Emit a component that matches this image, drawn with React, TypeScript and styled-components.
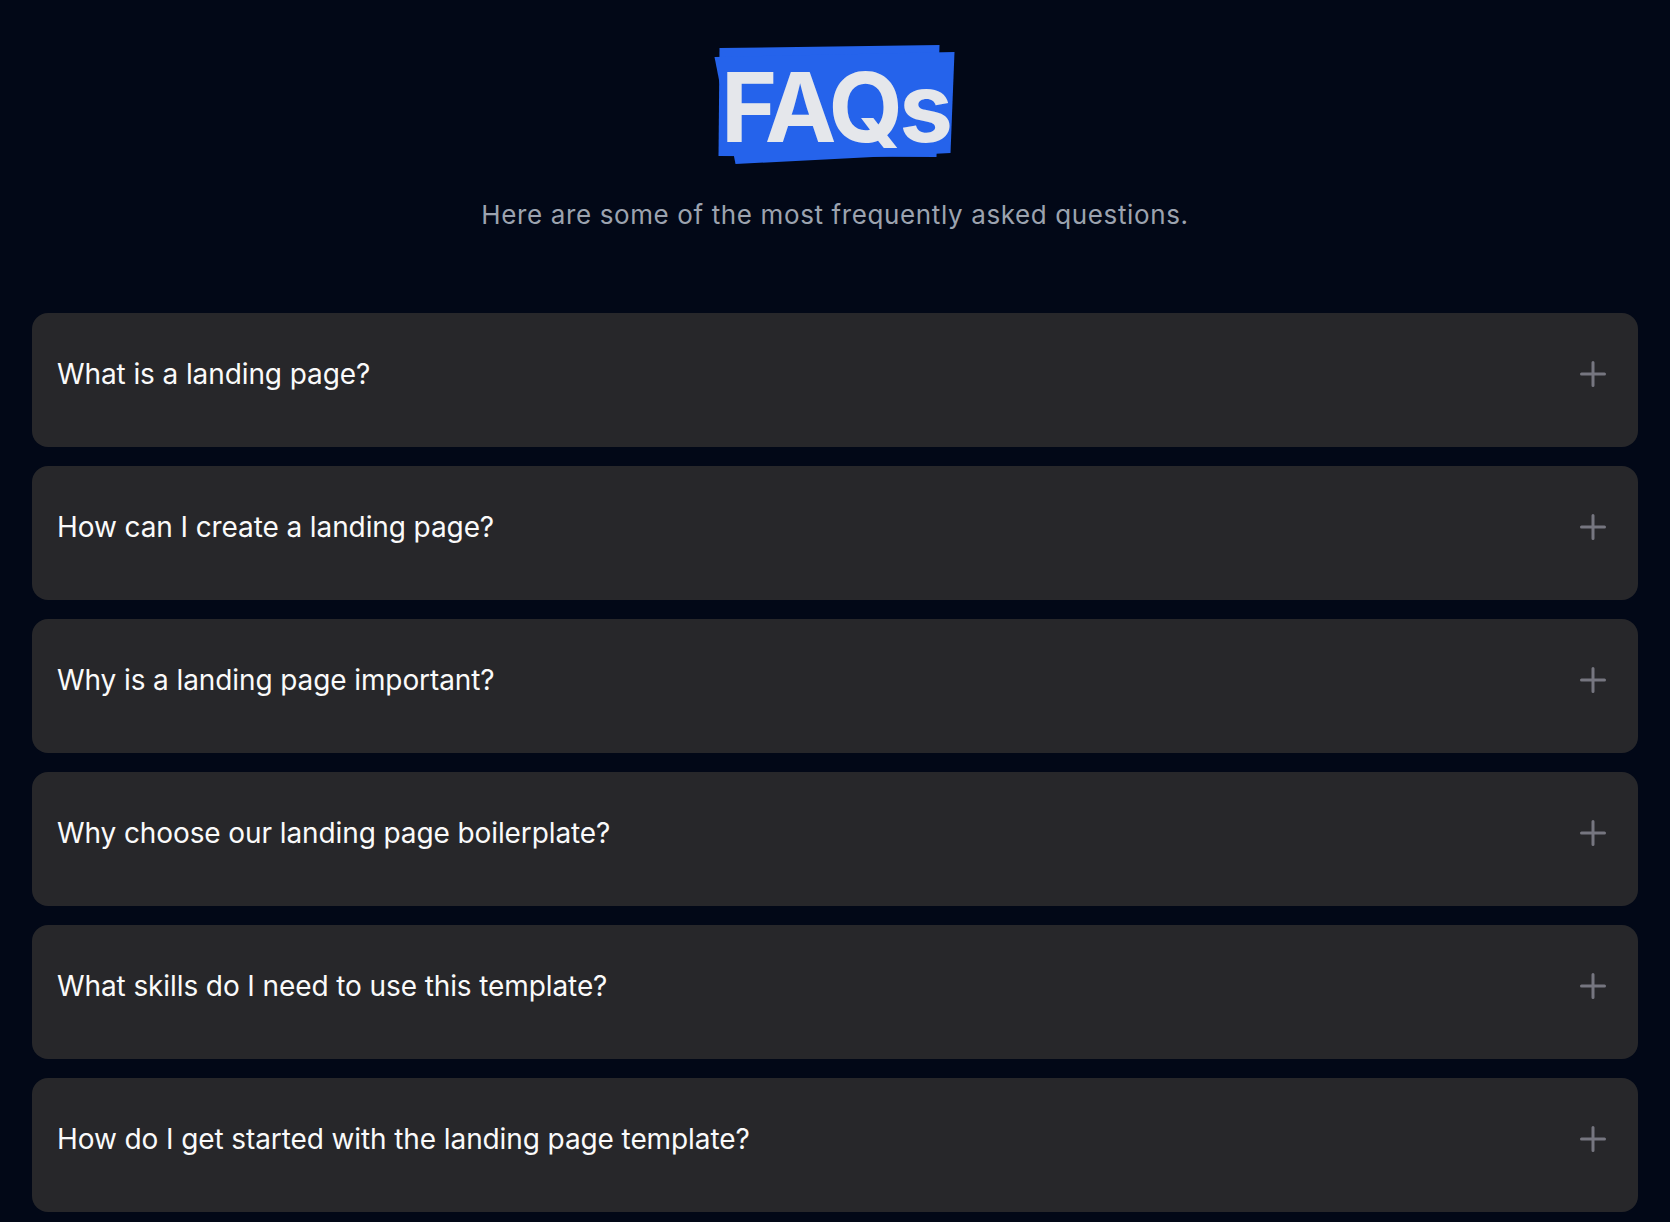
import React from "react";
import styled, { createGlobalStyle } from "styled-components";

const GlobalStyle = createGlobalStyle`
  html, body {
    margin: 0;
    padding: 0;
    background: #020817;
  }
  body {
    font-family: Inter, "Noto Sans", "Liberation Sans", sans-serif;
    -webkit-font-smoothing: antialiased;
  }
`;

const Page = styled.main`
  min-height: 1222px;
  background: #020817;
  padding: 60px 32px 0;
  box-sizing: border-box;
`;

const Hero = styled.header`
  display: flex;
  flex-direction: column;
  align-items: center;
`;

const TitleWrap = styled.div`
  position: relative;
  display: inline-block;
`;

const Highlight = styled.svg`
  position: absolute;
  left: 50%;
  top: -17px;
  width: 245px;
  height: 123px;
  transform: translateX(-50%);
  z-index: 0;
`;

const Title = styled.h1`
  position: relative;
  z-index: 1;
  margin: 0;
  font-family: Inter, "Liberation Sans", sans-serif;
  font-weight: 700;
  font-size: 96px;
  line-height: 95px;
  letter-spacing: -0.04em;
  color: #e5e7eb;
`;

const Subtitle = styled.p`
  margin: 41px 0 0;
  font-size: 26px;
  line-height: 38px;
  letter-spacing: 0.62px;
  color: #9ca3af;
  font-weight: 400;
`;

const List = styled.section`
  margin-top: 79px;
  display: flex;
  flex-direction: column;
  gap: 19px;
`;

const Card = styled.div`
  background: #27272a;
  border-radius: 16px;
  padding: 44px 32px 56px 25px;
  box-sizing: border-box;
`;

const Trigger = styled.button`
  all: unset;
  box-sizing: border-box;
  width: 100%;
  display: flex;
  align-items: center;
  justify-content: space-between;
  cursor: pointer;
`;

const Question = styled.span`
  font-size: 28px;
  line-height: 34px;
  letter-spacing: -0.1px;
  color: #fafafa;
  font-weight: 400;
`;

const PlusIcon = styled.svg`
  width: 26px;
  height: 26px;
  flex-shrink: 0;
`;

const questions = [
  "What is a landing page?",
  "How can I create a landing page?",
  "Why is a landing page important?",
  "Why choose our landing page boilerplate?",
  "What skills do I need to use this template?",
  "How do I get started with the landing page template?",
];

export default function App() {
  return (
    <>
      <GlobalStyle />
      <Page>
        <Hero>
          <TitleWrap>
            <Highlight viewBox="0 0 245 123" aria-hidden>
              <polygon points="7,5 227,2 224,114 6,113" fill="#2563eb" />
              <polygon points="2,14 242,9 238,110 23,121" fill="#2563eb" />
            </Highlight>
            <Title>FAQs</Title>
          </TitleWrap>
          <Subtitle>Here are some of the most frequently asked questions.</Subtitle>
        </Hero>
        <List>
          {questions.map((q) => (
            <Card key={q}>
              <Trigger type="button">
                <Question>{q}</Question>
                <PlusIcon viewBox="0 0 26 26" aria-hidden>
                  <path
                    d="M13 1.5v23M1.5 13h23"
                    stroke="#767680"
                    strokeWidth="3"
                    strokeLinecap="round"
                    fill="none"
                  />
                </PlusIcon>
              </Trigger>
            </Card>
          ))}
        </List>
      </Page>
    </>
  );
}
